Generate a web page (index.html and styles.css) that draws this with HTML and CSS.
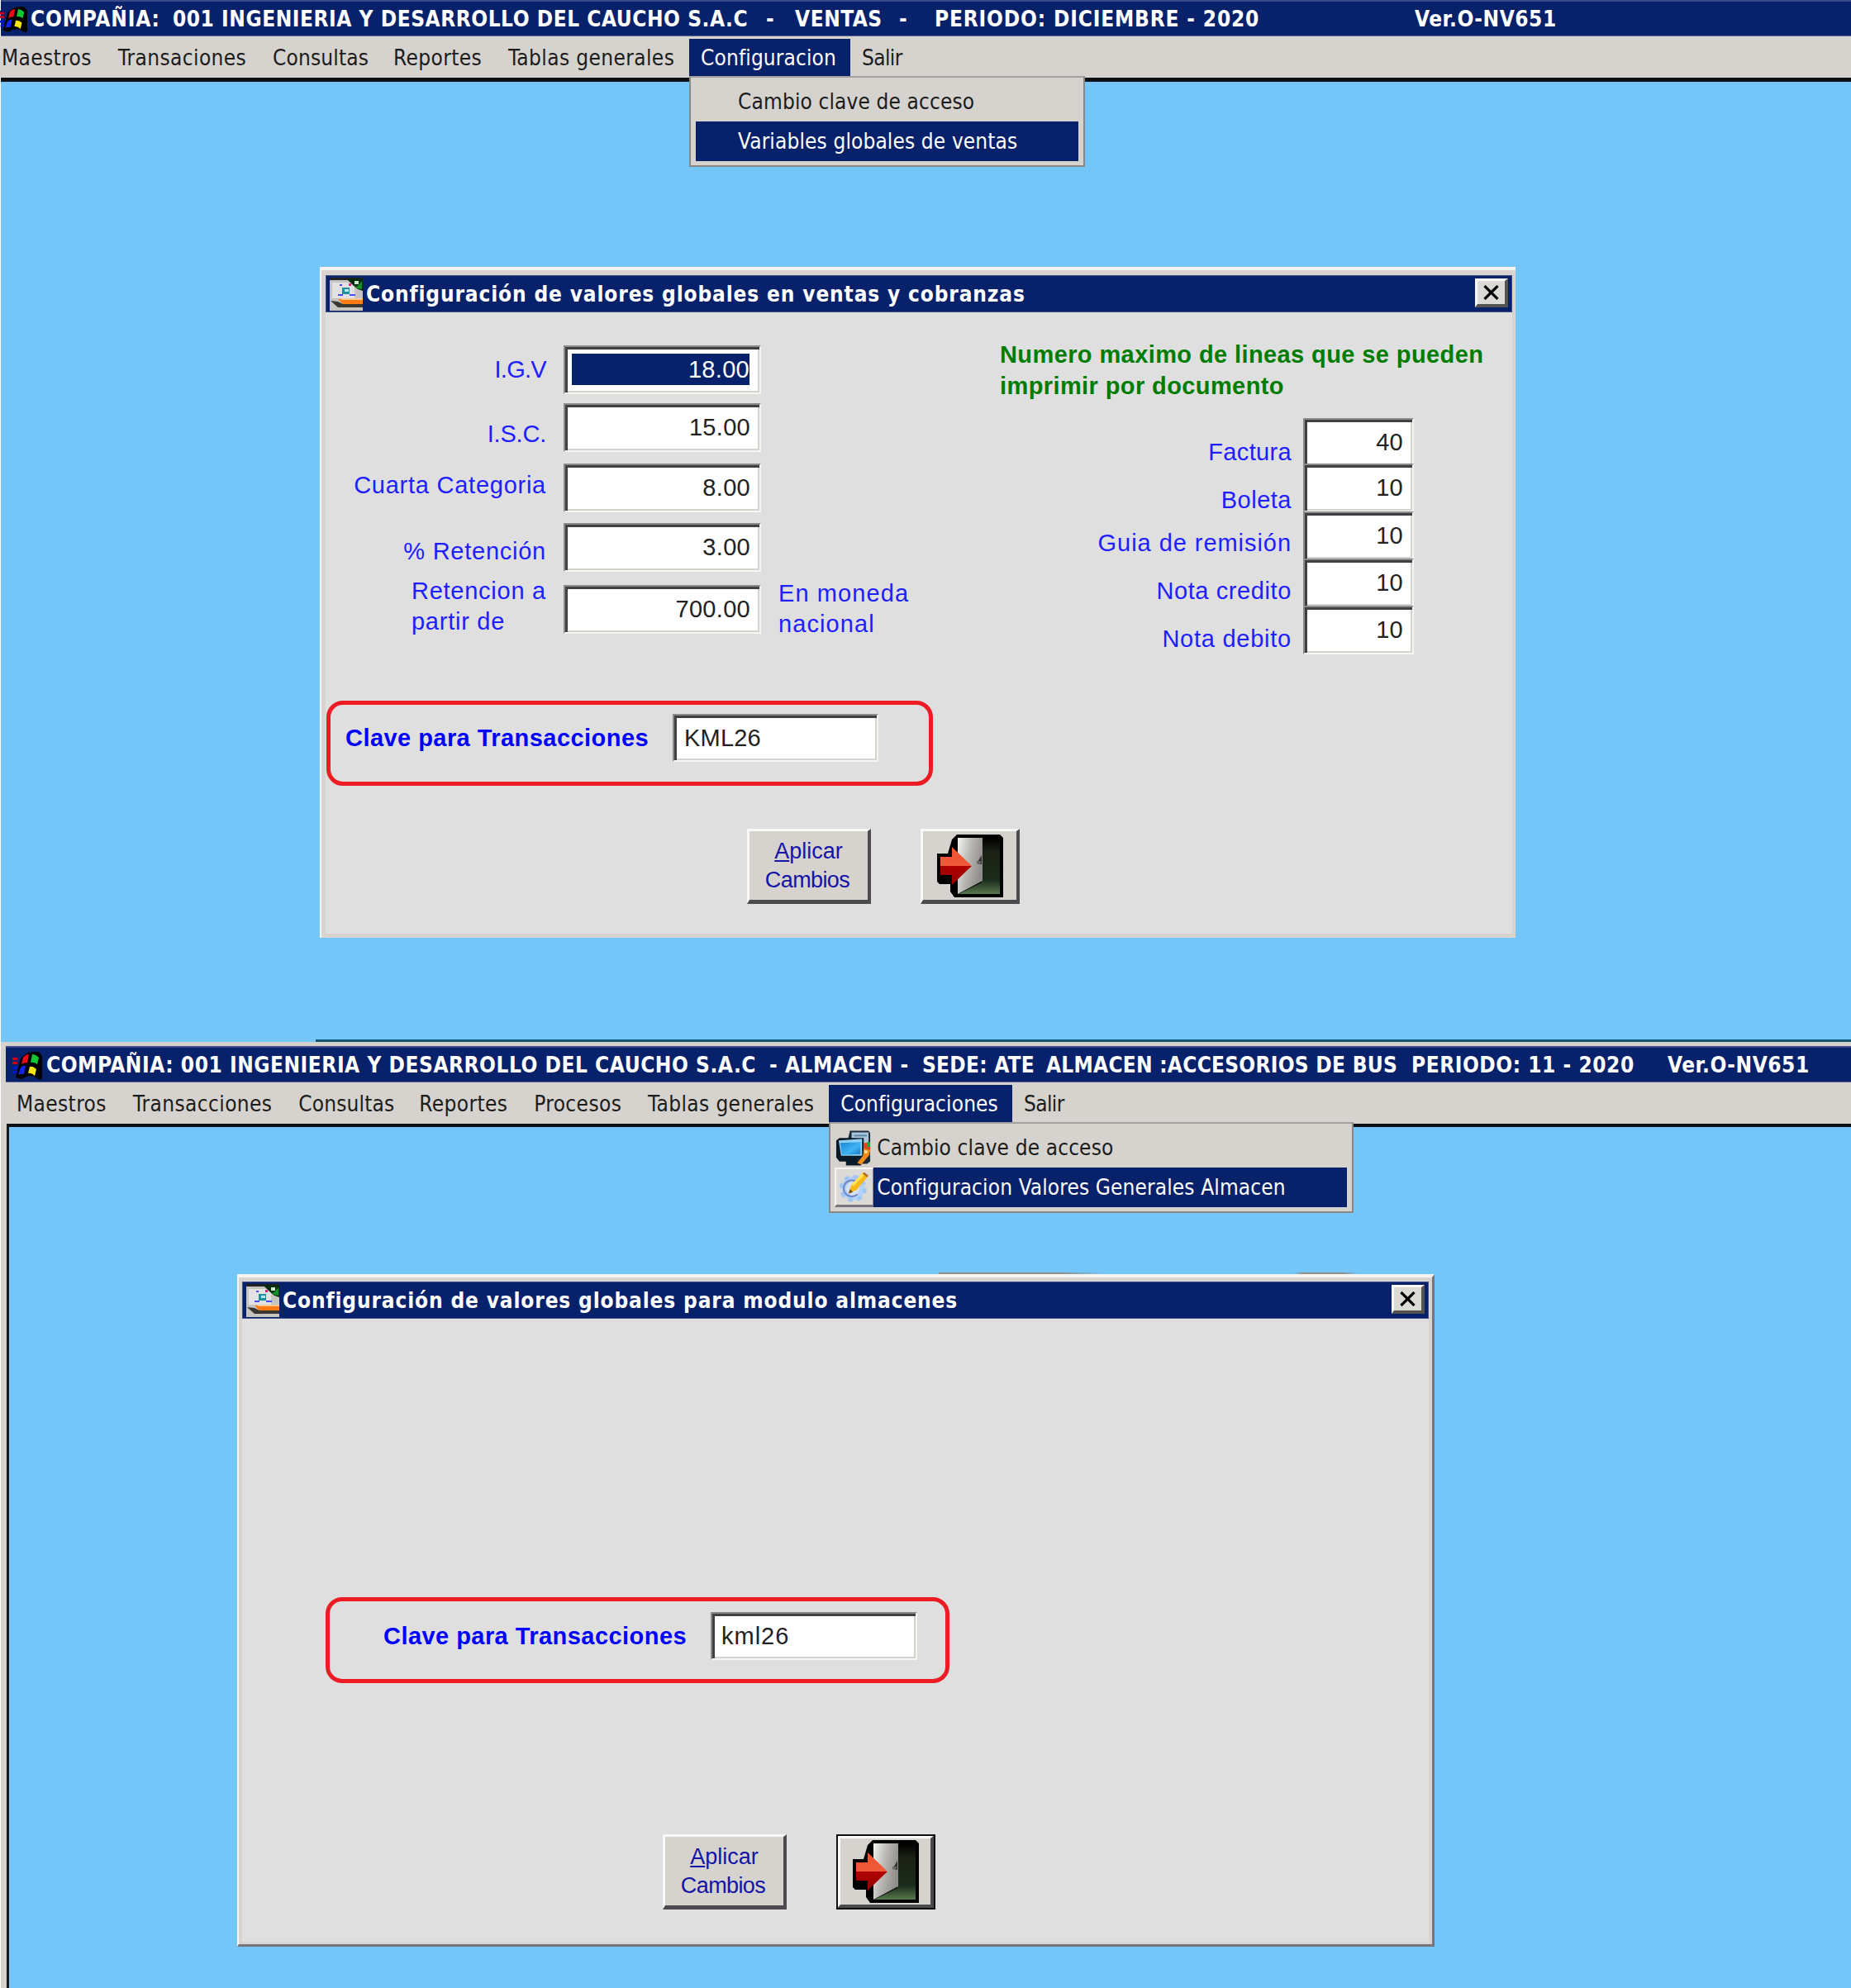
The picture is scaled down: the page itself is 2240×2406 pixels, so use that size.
FILE: index.html
```html
<!DOCTYPE html>
<html lang="es">
<head>
<meta charset="utf-8">
<title>Ventas y Almacen</title>
<link rel="stylesheet" href="styles.css">
</head>
<body>
<svg class="defs" aria-hidden="true">
  <defs>
    <linearGradient id="leaf" x1="0" y1="0" x2="1" y2="0.4"><stop offset="0" stop-color="#f4f4f2"/><stop offset="0.5" stop-color="#b9b8b4"/><stop offset="1" stop-color="#8f8e8b"/></linearGradient>
    <linearGradient id="room" x1="0" y1="0" x2="0" y2="1"><stop offset="0" stop-color="#000"/><stop offset="0.25" stop-color="#1b2114"/><stop offset="0.75" stop-color="#1a2c1c"/><stop offset="1" stop-color="#58784e"/></linearGradient>
    <linearGradient id="arrow" x1="0" y1="0" x2="0" y2="1"><stop offset="0" stop-color="#f0502c"/><stop offset="0.5" stop-color="#ee5a3a"/><stop offset="0.51" stop-color="#b00000"/><stop offset="1" stop-color="#960000"/></linearGradient>
    <linearGradient id="screen" x1="0" y1="0" x2="1" y2="1"><stop offset="0" stop-color="#1c84d8"/><stop offset="0.6" stop-color="#3fb4f2"/><stop offset="1" stop-color="#1670c0"/></linearGradient>
    <symbol id="flag" viewBox="0 0 38 36">
      <path d="M2 7h6v3H2zM0 13h5v3H0zM3 26h5v3H3z" fill="#1b1464"/>
      <path d="M2 9h6v3H2zM2 14h6v3H2z" fill="#c40018"/>
      <path d="M2 20h6v3H2zM3 25h5v3H3z" fill="#0018d0"/>
      <path d="M12 10Q20 0 34 2L38 7V34L35 36Q24 27 13 35L6 33Z" fill="#000"/>
      <path d="M15 9Q18 5 22 5L20 15Q16 15 13 17Z" fill="#e80c18"/>
      <path d="M26 5Q30 5 34 9L32 17Q28 14 24 15Z" fill="#12c832"/>
      <path d="M12 21Q15 18 18 19L16 29Q13 28 9 30Z" fill="#1524e8"/>
      <path d="M23 20Q27 19 31 23L29 31Q25 27 21 28Z" fill="#f4e610"/>
    </symbol>
    <symbol id="form" viewBox="0 0 40 40">
      <path d="M0 0H40V40H0Z" fill="#c4c4c0"/>
      <path d="M0 0H40V3H0Z" fill="#222"/><path d="M3 6H30V25H3Z" fill="#e2e2e2"/>
      <path d="M20 1L40 1V16L34 14 28 9Z" fill="#062a0c"/><path d="M30 8L33 11 39 4 39 14 33 13Z" fill="#12902a"/><path d="M30 4H35V8H30Z" fill="#c8e8cc"/>
      <path d="M12 8H15V10H12ZM10 20H16V22H10ZM24 20H31V22H24Z" fill="#4a4aff"/><path d="M23 7H26V10H23Z" fill="#e02080"/>
      <path d="M15 12H24V20H15Z" fill="#1d8f9c"/><path d="M18 14H23V17H18Z" fill="#b8ecf0"/>
      <path d="M10 26H40V32H16Z" fill="#ff7a10"/><path d="M14 25H40V27H14Z" fill="#ffc890"/>
      <path d="M1 28L10 29 16 32H40V36H10Z" fill="#3a3630"/>
    </symbol>
    <symbol id="door" viewBox="0 0 80 76">
      <path d="M24 0H76L80 4V76H21L16 69V60H3L0 57V23H13L18 6Z" fill="#000"/>
      <path d="M54 4H76V72H26L54 58Z" fill="url(#room)"/>
      <path d="M25 4H55V56L25 72Z" fill="url(#leaf)"/>
      <path d="M54 25L48 35 54 36Z" fill="#333"/><path d="M48 32H53V35H48Z" fill="#666"/>
      <path d="M4 27H18V15L42 38 18 61V49H4Z" fill="url(#arrow)"/>
    </symbol>
    <symbol id="computer" viewBox="0 0 44 43">
      <path d="M17 0H40L42 3V38L38 41H14V12Z" fill="#1a2a38"/><path d="M19 2H40V30H19Z" fill="#a9c6dc"/><path d="M22 5H38V7H22Z" fill="#5e87a8"/>
      <path d="M0 12L4 9H34V34H26V38H31V43H12V38H4L0 33Z" fill="#0b1a28"/>
      <path d="M3 12L32 10V31H6Z" fill="#8fd0f4"/><path d="M5 15L30 14V29L7 30Z" fill="url(#screen)"/>
      <path d="M34 15H42V26H34Z" fill="#e0481c"/><path d="M38 14H42V20H38Z" fill="#28a03c"/>
      <path d="M34 22L42 24 41 30 31 42 26 40 33 31Z" fill="#f08a1c"/><path d="M35 24L39 25 38 28 35 28Z" fill="#ffe9a0"/>
    </symbol>
    <symbol id="gear" viewBox="0 0 40 40">
      <circle cx="18" cy="22" r="12" fill="none" stroke="#b4d2f6" stroke-width="8"/>
      <circle cx="18" cy="22" r="16" fill="none" stroke="#9ec6f6" stroke-width="5" stroke-dasharray="6.3 6.3"/>
      <circle cx="18" cy="22" r="9" fill="#d8e2ee"/>
      <path d="M21 12A11 11 0 1 0 24 30" fill="none" stroke="#7488c8" stroke-width="2.5"/>
      <path d="M12 29L16 17 31 1 38 6 23 24Z" fill="#f8b818"/><path d="M16 17L31 1 34 3 19 19Z" fill="#ffe45a"/><path d="M12 29L14 23 18 27Z" fill="#7a4a20"/><path d="M31 2L33 0 39 5 37 7Z" fill="#b86a18"/>
    </symbol>
    <symbol id="cross" viewBox="0 0 20 18"><path d="M2 1L18 17M18 1L2 17" stroke="#000" stroke-width="3.2" fill="none"/></symbol>
  </defs>
</svg>

<section class="app sales">
  <header class="titlebar">
    <svg class="flag"><use href="#flag"/></svg>
    <div class="caption"><span class="wide">COMPAÑIA:</span><span>001 INGENIERIA Y DESARROLLO DEL CAUCHO S.A.C</span><span>-</span><span>VENTAS</span><span>-</span><span class="wide">PERIODO: DICIEMBRE - 2020</span><span>Ver.O-NV651</span></div>
  </header>
  <nav class="menubar">
    <span>Maestros</span><span>Transaciones</span><span class="fit">Consultas</span><span>Reportes</span><span>Tablas generales</span>
    <div class="open">Configuracion
      <div class="dropdown">
        <div class="item">Cambio clave de acceso</div>
        <div class="item active">Variables globales de ventas</div>
      </div>
    </div>
    <span class="last">Salir</span>
  </nav>
  <main class="desk">
    <div class="dialog config">
      <div class="dlgbar"><svg class="formicon"><use href="#form"/></svg><h2>Configuración de valores globales en ventas y cobranzas</h2><button class="close"><svg><use href="#cross"/></svg></button></div>
      <div class="panels">
        <div class="rates">
          <label class="igv">I.G.V</label><div class="field num"><mark>18.00</mark></div>
          <label class="isc">I.S.C.</label><div class="field num">15.00</div>
          <label class="cuarta">Cuarta Categoria</label><div class="field num">8.00</div>
          <label class="retencion">% Retención</label><div class="field num">3.00</div>
          <label class="desde">Retencion a<br>partir de</label><div class="field num">700.00</div>
          <p class="note">En moneda<br>nacional</p>
        </div>
        <div class="limits">
          <h3>Numero maximo de lineas que se pueden<br>imprimir por documento</h3>
          <div class="docs">
            <label class="factura">Factura</label><div class="field num">40</div>
            <label class="boleta">Boleta</label><div class="field num">10</div>
            <label class="guia">Guia de remisión</label><div class="field num">10</div>
            <label class="credito">Nota credito</label><div class="field num">10</div>
            <label class="debito">Nota debito</label><div class="field num">10</div>
          </div>
        </div>
      </div>
      <div class="key"><label>Clave para Transacciones</label><div class="field">KML26</div></div>
      <div class="actions"><button class="btn apply"><u>A</u>plicar<br><span class="tight">Cambios</span></button><button class="btn exit"><svg><use href="#door"/></svg></button></div>
    </div>
  </main>
</section>

<section class="app store">
  <header class="titlebar">
    <svg class="flag"><use href="#flag"/></svg>
    <div class="caption"><span>COMPAÑIA: 001 INGENIERIA Y DESARROLLO DEL CAUCHO S.A.C</span><span>- ALMACEN -</span><span class="narrow">SEDE: ATE</span><span class="narrow">ALMACEN :ACCESORIOS DE BUS</span><span>PERIODO: 11 - 2020</span><span>Ver.O-NV651</span></div>
  </header>
  <nav class="menubar">
    <span>Maestros</span><span>Transacciones</span><span class="fit">Consultas</span><span>Reportes</span><span>Procesos</span><span>Tablas generales</span>
    <div class="open">Configuraciones
      <div class="dropdown icons">
        <div class="item"><svg><use href="#computer"/></svg>Cambio clave de acceso</div>
        <div class="item active"><svg class="raised" viewBox="-3 -4 46 48"><use href="#gear" width="40" height="40"/></svg>Configuracion Valores Generales Almacen</div>
      </div>
    </div>
    <span class="last">Salir</span>
  </nav>
  <main class="desk">
    <div class="dialog stock">
      <div class="dlgbar"><svg class="formicon"><use href="#form"/></svg><h2>Configuración de valores globales para modulo almacenes</h2><button class="close"><svg><use href="#cross"/></svg></button></div>
      <div class="key"><label>Clave para Transacciones</label><div class="field">kml26</div></div>
      <div class="actions"><button class="btn apply"><u>A</u>plicar<br><span class="tight">Cambios</span></button><button class="btn exit focus"><svg><use href="#door"/></svg></button></div>
    </div>
  </main>
</section>
</body>
</html>
```
FILE: styles.css
```css
* { box-sizing: border-box; }
body { margin: 0; width: 2240px; background: #fff; font: 26px "DejaVu Sans Condensed", "DejaVu Sans", sans-serif; font-stretch: condensed; color: #1c1c1c; }
.defs { position: absolute; width: 0; height: 0; }
svg { display: block; flex: none; }
button { font: inherit; padding: 0; border: 0; }

.app { display: flex; flex-direction: column; padding-left: 1px; overflow: hidden; }
.sales { height: 1261px; }
.store { height: 1145px; background: #d6d2cb; border-left: 1px solid #fff; padding-left: 0; padding-top: 5px; }
.store .titlebar { margin-left: 6px; }
.titlebar { display: flex; align-items: center; height: 44px; background: #08216b; border-top: 2px solid #3a4a86; border-bottom: 1px solid #5a6699; color: #fff; font-size: 26px; font-weight: bold; letter-spacing: .53px; }
.titlebar .flag { width: 36px; height: 36px; }
.sales .flag { margin-left: -3px; width: 35px; }
.store .flag { margin-left: 6px; width: 38px; }
.caption { display: grid; white-space: pre; line-height: 42px; }
.wide { letter-spacing: .82px; }
.narrow { letter-spacing: .25px; }
.sales .caption { margin-left: 4px; grid-template-columns: 172px 718px 35px 126px 43px 581px auto; }
.store .caption { margin-left: 5px; grid-template-columns: 875px 185px 150px 442px 310px auto; }

.menubar { display: flex; height: 50px; padding-top: 3px; padding-bottom: 2px; background: #d6d3ce; font-size: 26px; line-height: 47px; white-space: nowrap; }
.menubar > span { padding: 0 17.9px 0 14px; letter-spacing: .38px; }
.menubar > .fit { padding-right: 16px; letter-spacing: .15px; }
.menubar .last { letter-spacing: -.6px; }
.sales .menubar { margin-left: -13px; }
.store .menubar { padding-left: 5px; height: 50px; }
.open { position: relative; padding: 0 17px 0 14px; background: #08216b; color: #fff; letter-spacing: .12px; }
.dropdown { position: absolute; z-index: 2; left: 0; top: 45px; width: 479px; height: 110px; padding: 5px 6px; background: #d6d3ce; border: 2px solid #8a8884; border-top-color: #a3a1a0; color: #1c1c1c; }
.item { display: flex; align-items: center; height: 48px; padding-left: 51px; }
.active { background: #08216b; color: #fff; }
.dropdown.icons { width: 635px; padding-left: 5px; padding-top: 5px; }
.icons .item { padding-left: 2px; gap: 6px; }
.icons .item svg { width: 43px; height: 43px; }
.icons .item .raised { width: 47px; height: 48px; margin-left: -2px; margin-right: -2px; background: #dcdad6; border: solid; border-width: 2px 1px 3px 2px; border-color: #f6f5f2 #8a8884 #77757a #f6f5f2; }

.desk { flex: 1; position: relative; background: #73c6f7; border-top: 5px solid #0c1014; }
.store .desk { border-top-width: 4px; border-left: 3px solid #15181a; margin-left: 7px; }
.sales .desk::after { content: ""; position: absolute; left: 381px; right: 0; bottom: 0; height: 3px; background: #13556f; }

.dialog { position: absolute; background: #dfdfdf; font-family: "Liberation Sans", Arial, sans-serif; font-size: 29px; border: solid; border-width: 10px 4px 5px 7px; border-color: #d8d5d0; }
.config { left: 386px; top: 224px; width: 1447px; height: 812px; }
.stock { left: 276px; top: 178px; width: 1449px; height: 814px; border-width: 9px 7px 6px 6px; }
.dialog::before { content: ""; position: absolute; inset: -10px -4px -5px -7px; border-left: 2px solid #f7f5f2; border-top: 4px solid #f7f5f2; pointer-events: none; }
.stock::before { inset: -9px -7px -6px -6px; border-right: 3px solid #77757a; border-bottom: 3px solid #77757a; }
.stock::after { content: ""; position: absolute; left: 843px; top: -11px; width: 507px; height: 2px; background: linear-gradient(90deg, #8f8e8c 0 150px, transparent 200px 430px, #8f8e8c 440px 490px, transparent); }
.dlgbar { display: flex; align-items: center; height: 45px; background: #08216b; border: 1px solid #414f86; font-family: "DejaVu Sans Condensed", "DejaVu Sans", sans-serif; color: #fff; }
.dlgbar h2 { margin: 0 0 0 4px; font-size: 26px; white-space: nowrap; letter-spacing: .85px; }
.formicon { width: 40px; height: 40px; margin-left: 4px; }
.close { display: grid; place-items: center; width: 40px; height: 35px; margin: 0 4px 2px auto; background: #dcdad5; border: solid; border-width: 3px 4px 4px 3px; border-color: #f8f8f6 #55534f #55534f #f8f8f6; }
.close svg { width: 21px; height: 18px; }

.panels { display: flex; color: #2020ff; letter-spacing: .75px; }
.field { height: 59px; background: #fff; color: #222; border: 2px solid; border-color: #8a8a8a #f6f5f3 #f6f5f3 #8a8a8a; box-shadow: inset 3px 3px #404040, inset -2px -2px #d6d3ce; padding: 0 11px 0 14px; line-height: 55px; letter-spacing: .3px; }
.num { text-align: right; }
.num mark { display: block; margin: 8px 1px 0 -6px; height: 38px; line-height: 38px; background: #08216b; color: #fff; }
.rates { display: grid; grid-template-columns: 267px 239px auto; column-gap: 21px; grid-template-rows: 70px 73px 72px 75px 59px; margin-top: 40px; width: 816px; }
.rates label { grid-column: 1; justify-self: end; line-height: 59px; white-space: nowrap; height: 59px; }
.rates .field { grid-column: 2; }
.rates .igv { letter-spacing: -.7px; }
.rates .isc { padding-top: 8px; letter-spacing: -.2px; }
.rates .cuarta { margin-top: -3px; }
.rates .retencion { padding-top: 5px; }
.rates .desde, .rates .note { line-height: 37px; }
.rates .desde { margin-top: -11px; }
.rates .note { grid-column: 3; grid-row: 5; margin: -8px 0 0; letter-spacing: 1.1px; }
.limits h3 { margin: 32px 0 0; color: #007d00; font-size: 29px; line-height: 38px; white-space: nowrap; letter-spacing: .4px; }
.docs { display: grid; grid-template-columns: 353px 134px; column-gap: 14px; grid-template-rows: 55px 58px 57px 57px 59px; margin-top: 20px; }
.docs label { justify-self: end; line-height: 59px; white-space: nowrap; }
.factura { padding-top: 12px; letter-spacing: .35px; }
.boleta { padding-top: 15px; letter-spacing: .5px; }
.guia { padding-top: 9px; letter-spacing: .95px; }
.credito { padding-top: 10px; letter-spacing: .6px; }
.debito { padding-top: 11px; }

.key { display: flex; border: 5px solid #ed1c24; border-radius: 20px; color: #0000ff; font-weight: bold; white-space: nowrap; letter-spacing: .45px; }
.key label { line-height: 58px; }
.key .field { font-weight: normal; height: 58px; padding: 0 12px; line-height: 55px; letter-spacing: .2px; }
.config .key { width: 734px; height: 103px; margin: 56px 0 0 1px; padding: 11px 0 0 18px; }
.config .key label { width: 396px; }
.config .key .field { width: 249px; }
.stock .key { width: 755px; height: 104px; margin: 337px 0 0 101px; padding: 13px 0 0 65px; }
.stock .key label { width: 396px; }
.stock .key .field { width: 250px; letter-spacing: 1px; padding-left: 11px; }

.actions { display: flex; }
.config .actions { margin: 52px 0 0 510px; gap: 60px; }
.stock .actions { margin: 183px 0 0 509px; gap: 60px; }
.btn { height: 91px; background: #d6d3ce; border: solid; border-width: 3px 4px 5px 3px; border-color: #f8f8f6 #4c4a4e #4c4a4e #f8f8f6; }
.apply { width: 150px; color: #1414a8; font-size: 27px; line-height: 35px; }
.tight { letter-spacing: -.6px; margin-left: -3px; }
.exit { width: 120px; display: grid; place-items: center; }
.exit svg { width: 80px; height: 76px; }
.focus { outline: 2px solid #111; outline-offset: -2px; border-width: 5px 6px 6px 5px; }
```
